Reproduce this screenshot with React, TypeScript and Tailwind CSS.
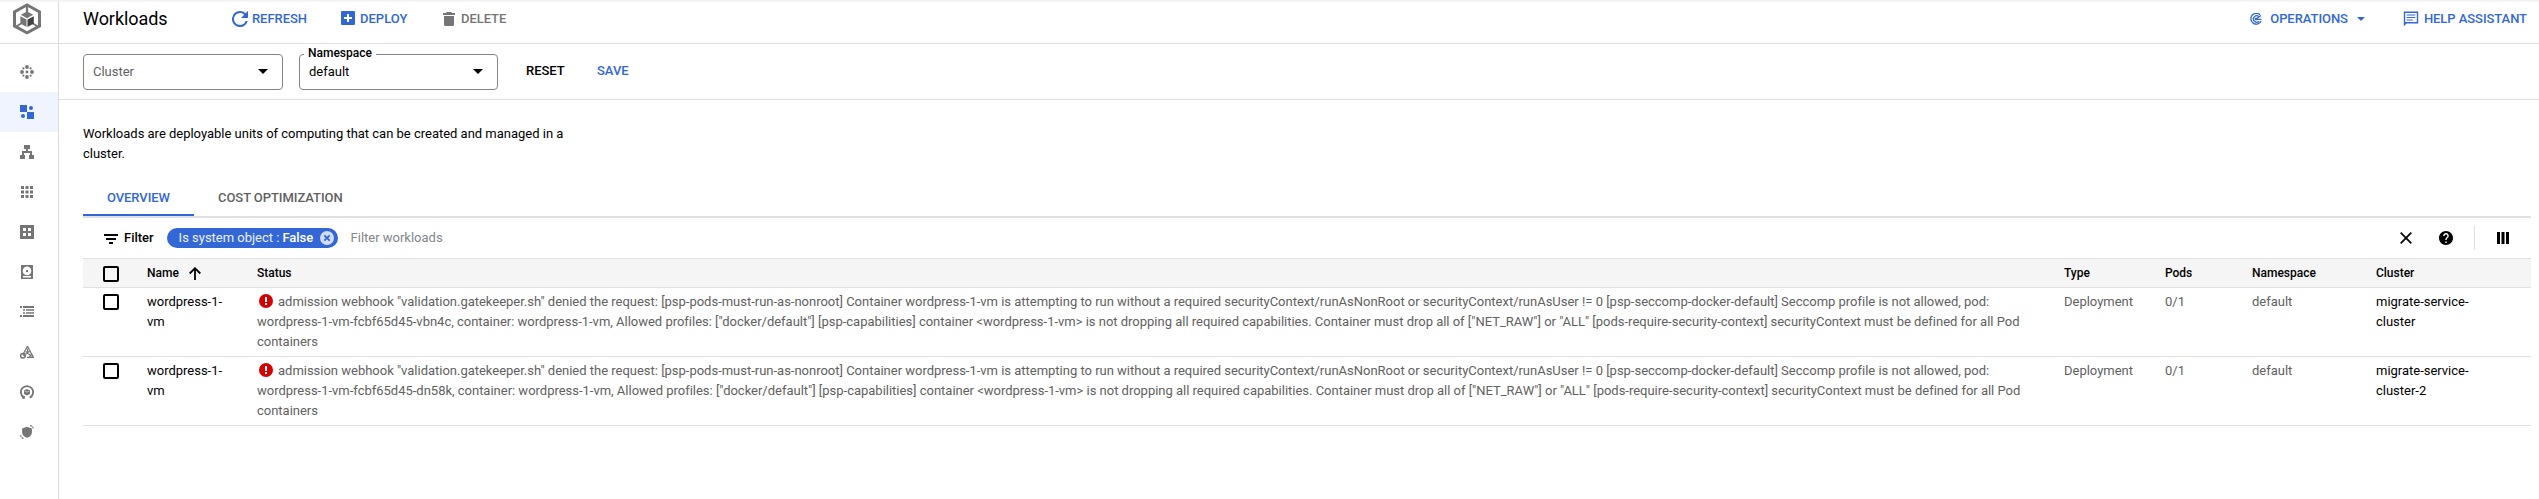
import type { ReactNode } from "react";

type GlyphProps = { children: ReactNode; size?: number; box?: string; className?: string };

function Glyph({ children, size = 14, box = "0 0 14 14", className = "" }: GlyphProps) {
  return (
    <svg width={size} height={size} viewBox={box} fill="currentColor" className={`shrink-0 ${className}`}>
      {children}
    </svg>
  );
}

function KubernetesLogo() {
  return (
    <svg width="28" height="32" viewBox="0 0 28 32" fill="#757575" className="shrink-0">
      <path d="M14 .2 28 7.900V23.900L14 31.600 0 23.900V7.900ZM14 3.600 3 9.700V22.100L14 28.200 25 22.100V9.700Z" fillRule="evenodd" />
      <path d="M12.900 3h2.200v6h-2.200ZM3 22.600l5.200-3 .9 1.500-5.200 3ZM25 22.600l-5.200-3-.9 1.500 5.200 3Z" />
      <path d="M14 8.400 20.200 11.800 14 15.200 7.800 11.800Z" />
      <path d="M7.400 13.200 13.500 16.600V24L7.400 20.600Z" />
      <path d="M20.800 13.200 14.500 16.600V24L20.800 20.600Z" fill="#424242" />
    </svg>
  );
}

const navIcons: { id: string; art: ReactNode }[] = [
  {
    id: "clusters",
    art: (
      <>
        <circle cx="7" cy="2" r="1.9" />
        <circle cx="7" cy="12" r="1.9" />
        <circle cx="2" cy="7" r="1.9" />
        <circle cx="12" cy="7" r="1.9" />
        <circle cx="7" cy="7" r="1.4" />
        <circle cx="3.4" cy="3.4" r="1.1" />
        <circle cx="10.6" cy="3.4" r="1.1" />
        <circle cx="3.4" cy="10.6" r="1.1" />
        <circle cx="10.6" cy="10.6" r="1.1" />
      </>
    ),
  },
  {
    id: "workloads",
    art: (
      <>
        <path d="M0 0h7v7H0ZM7 7h7v7H7Z" />
        <circle cx="11" cy="3" r="2" />
        <circle cx="3" cy="11" r="2" />
      </>
    ),
  },
  { id: "services", art: <path d="M4 0h6v4H8v2h4v4h2v4H9v-4h1V8H4v2h1v4H0v-4h2V6h4V4H4Z" /> },
  {
    id: "applications",
    art: <path d="M1 1h3v3H1ZM5.500 1h3v3h-3ZM10 1h3v3h-3ZM1 5.500h3v3H1ZM5.500 5.500h3v3h-3ZM10 5.500h3v3h-3ZM1 10h3v3H1ZM5.500 10h3v3h-3ZM10 10h3v3h-3Z" />,
  },
  { id: "secrets", art: <path fillRule="evenodd" d="M0 0h14v14H0ZM3 3v3h3V3ZM8 3v3h3V3ZM3 8v3h3V8ZM8 8v3h3V8Z" /> },
  {
    id: "storage",
    art: (
      <path
        fillRule="evenodd"
        d="M1 0h12v14H1ZM7 1.600a4.300 4.300 0 1 0 0 8.600 4.300 4.300 0 0 0 0-8.600ZM7 4.900a1.200 1.200 0 1 1 0 2.400 1.200 1.200 0 0 1 0-2.400ZM3 11v1.500h8V11Z"
      />
    ),
  },
  {
    id: "objects",
    art: <path d="M0 1h2v2H0ZM3 1h11v2H3ZM3 4.200h2v1.600H3ZM6 4.200h8v1.600H6ZM3 7.200h2v1.600H3ZM6 7.200h8v1.600H6ZM0 10h2v2H0ZM3 10h11v2H3Z" />,
  },
  {
    id: "migrate",
    art: (
      <>
        <path d="M7.500 1.300 13.300 12.300H7M7.500 1.300 3.600 8.300" fill="none" stroke="currentColor" strokeWidth="1.300" />
        <path
          d="M7.500 3.800V8.300L11.800 11.300M7.500 8.300 5.200 9.500M9.600 6.400 7.500 7.500 5.600 6.600M11.300 9.600 9.300 11.800"
          fill="none"
          stroke="currentColor"
          strokeWidth="1.200"
        />
        <circle cx="2.900" cy="10.800" r="2.300" fill="none" stroke="currentColor" strokeWidth="1.500" />
        <path d="M2.500 9.500 5 8.200 6.200 10.400 4 11.500Z" />
      </>
    ),
  },
  {
    id: "backup",
    art: (
      <>
        <path d="M4.300 12.600A6.100 6.100 0 1 1 9.700 12.600" fill="none" stroke="currentColor" strokeWidth="1.800" />
        <path d="M7 3.900 10 5.400V8.900L7 10.500 4 8.900V5.400Z" />
        <path d="M4.800 6 7 7.200 9.200 6" fill="none" stroke="#fff" strokeWidth=".6" />
        <path d="M2.300 13.700 2 12.500 4.900 10.700V13.700Z" />
      </>
    ),
  },
  {
    id: "security",
    art: (
      <>
        <path d="M7 1.700 11.900 3.500V7.200C11.900 9.900 9.800 11.900 7 12.800 4.200 11.900 2.100 9.900 2.100 7.200V3.500Z" />
        <path
          d="M10 .6C11.800.6 13.300 2 13.300 4M.7 10C.7 12 2.200 13.400 4 13.400"
          fill="none"
          stroke="currentColor"
          strokeWidth="1.100"
          strokeDasharray="2 .7"
        />
      </>
    ),
  },
];

function Caret() {
  return (
    <svg width="10" height="5" viewBox="0 0 10 5" className="shrink-0 text-black">
      <path d="M0 0h10L5 5Z" fill="currentColor" />
    </svg>
  );
}

function RefreshIcon() {
  return (
    <Glyph size={16} box="4 4 16 16">
      <path d="M17.650 6.350A7.960 7.960 0 0 0 12 4a8 8 0 1 0 7.730 10h-2.080A6 6 0 1 1 12 6c1.660 0 3.140.690 4.220 1.780L13 11h7V4Z" />
    </Glyph>
  );
}

function ErrorIcon() {
  return (
    <svg width="14" height="14" viewBox="0 0 14 14" className="ml-0.5 mr-[5px] inline-block align-[-2px]">
      <circle cx="7" cy="7" r="7" fill="#d50000" />
      <path d="M6 3h2v5H6ZM6 9h2v2H6Z" fill="#fff" />
    </svg>
  );
}

function Checkbox() {
  return <span className="block size-4 rounded-[2px] border-2 border-black" />;
}

const COLS = "grid grid-cols-[64px_110px_1807px_101px_87px_124px_155px]";

const rows = [
  { pod: "wordpress-1-vm-fcbf65d45-vbn4c", cluster: "migrate-service-cluster" },
  { pod: "wordpress-1-vm-fcbf65d45-dn58k", cluster: "migrate-service-cluster-2" },
];

const statusMessage = (pod: string) =>
  `admission webhook "validation.gatekeeper.sh" denied the request: [psp-pods-must-run-as-nonroot] Container wordpress-1-vm is attempting to run without a required securityContext/runAsNonRoot or securityContext/runAsUser != 0 [psp-seccomp-docker-default] Seccomp profile is not allowed, pod: ${pod}, container: wordpress-1-vm, Allowed profiles: ["docker/default"] [psp-capabilities] container <wordpress-1-vm> is not dropping all required capabilities. Container must drop all of ["NET_RAW"] or "ALL" [pods-require-security-context] securityContext must be defined for all Pod containers`;

export default function App() {
  return (
    <div className="relative flex h-[499px] w-[2539px] overflow-hidden bg-white font-['Roboto',sans-serif] text-[13px] leading-5 tracking-[-0.011px] text-black">
      <div className="absolute inset-x-0 top-0 h-[3px] bg-gradient-to-b from-[#f0f0f0] to-white/0" />
      <aside className="flex w-[59px] shrink-0 flex-col border-r border-[#dadce0] text-[#757575]">
        <div className="flex h-[44px] items-start border-b border-[#e0e0e0] pl-[13px] pt-[3px]">
          <KubernetesLogo />
        </div>
        <nav className="flex flex-col pt-2">
          {navIcons.map(({ id, art }) => (
            <a key={id} className={`flex h-10 items-center pl-5 ${id === "workloads" ? "bg-[#eff4fe] text-[#3367d6]" : ""}`}>
              <Glyph>{art}</Glyph>
            </a>
          ))}
        </nav>
      </aside>

      <main className="flex min-w-0 flex-1 flex-col">
        <header className="flex h-[44px] items-center border-b border-[#e0e0e0] pb-[5px] pl-6 font-medium tracking-[-0.06px] text-[#3367d6]">
          <h1 className="w-[149px] text-[18px] font-normal text-black">Workloads</h1>
          <button className="flex w-[109px] items-center gap-1">
            <RefreshIcon />
            REFRESH
          </button>
          <button className="flex w-[102px] items-center gap-[5px] tracking-normal">
            <Glyph className="-mt-0.5">
              <path
                fillRule="evenodd"
                d="M1 0h12a1 1 0 0 1 1 1v12a1 1 0 0 1-1 1H1a1 1 0 0 1-1-1V1a1 1 0 0 1 1-1ZM6 3v3H3v2h3v3h2V8h3V6H8V3Z"
              />
            </Glyph>
            DEPLOY
          </button>
          <button className="flex items-center gap-1.5 text-[#757575]">
            <svg width="12" height="14" viewBox="0 0 12 14" fill="currentColor">
              <path d="M3.500 0h5v1H12v2H0V1h3.500ZM1 4h10v8.500a1.500 1.500 0 0 1-1.500 1.500h-7A1.500 1.500 0 0 1 1 12.500Z" />
            </svg>
            DELETE
          </button>
          <button className="ml-auto flex items-center">
            <Glyph size={12} box="0 0 12 12" className="mr-2">
              <path
                d="M10 1.800A5.400 5.400 0 1 0 11.200 8M8.800 3.600A3.200 3.200 0 1 0 9 8.200M6 6 11 2.500M6 6.300H11.500"
                fill="none"
                stroke="currentColor"
                strokeWidth="1.300"
              />
              <circle cx="6" cy="6" r="1.300" />
            </Glyph>
            OPERATIONS
            <svg width="8" height="4" viewBox="0 0 8 4" className="ml-[9px]">
              <path d="M0 0h8L4 4Z" fill="currentColor" />
            </svg>
          </button>
          <button className="ml-[38px] mr-3 flex items-center gap-[5px]">
            <Glyph size={16} box="0 0 16 16">
              <path fillRule="evenodd" d="M.8.500h14.400v12H3.500L.8 15.300ZM2.200 1.900v9.200h11.600V1.900Z" />
              <path d="M3.700 3.400h8.600v1.200H3.700ZM3.700 5.900h8.600v1.200H3.700ZM3.700 8.400h6v1.200h-6Z" />
            </Glyph>
            HELP ASSISTANT
          </button>
        </header>

        <section className="flex h-[56px] items-start border-b border-[#e0e0e0] pl-6 pt-2.5 font-medium">
          <div className="flex h-9 w-[200px] items-center justify-between rounded-[4px] border border-[#80868b] pb-px pl-[9px] pr-[14px] font-normal text-[#616161]">
            Cluster
            <Caret />
          </div>
          <div className="relative ml-4 flex h-9 w-[199px] items-center justify-between rounded-[4px] border border-[#80868b] pb-px pl-[9px] pr-[14px] font-normal">
            <span className="absolute -top-2.5 left-1 bg-white px-1 text-xs leading-4 font-medium">Namespace</span>
            default
            <Caret />
          </div>
          <button className="ml-7 mt-[7px] w-[71px] text-left">RESET</button>
          <button className="mt-[7px] text-[#3367d6]">SAVE</button>
        </section>

        <div className="pl-6 pr-2">
          <p className="w-[490px] pt-6">Workloads are deployable units of computing that can be created and managed in a cluster.</p>

          <div className="mt-4 flex h-[38px] border-b-2 border-[#e0e0e0] font-medium tracking-[-0.06px] text-[#616161]">
            <div className="h-[36px] w-[111px] border-b-2 border-[#3367d6] pt-2 text-center text-[#3367d6]">OVERVIEW</div>
            <div className="pl-6 pt-2">COST OPTIMIZATION</div>
          </div>

          <div className="flex h-10 items-center pl-[21px]">
            <svg width="14" height="10" viewBox="0 0 14 10" className="mt-px">
              <path d="M0 0h14v2H0ZM2 4h10v2H2ZM5 8h4v2H5Z" />
            </svg>
            <span className="ml-1.5 font-medium">Filter</span>
            <div className="ml-[13px] flex h-5 w-[171px] items-center rounded-full bg-[#3367d6] pl-3 text-white">
              <span className="text-white/90">Is system object :</span>
              <span className="ml-[3px] font-medium">False</span>
              <svg width="14" height="14" viewBox="0 0 14 14" className="ml-auto mr-1">
                <circle cx="7" cy="7" r="7" fill="#d1dcf5" />
                <path d="m4.300 4.300 5.400 5.400M9.700 4.300 4.300 9.700" stroke="#3367d6" strokeWidth="1.800" />
              </svg>
            </div>
            <span className="ml-[13px] text-[#80868b]">Filter workloads</span>
            <svg width="12" height="12" viewBox="0 0 12 12" className="ml-auto mr-[27px]">
              <path d="m.7.700 10.600 10.600M11.300.700.7 11.300" stroke="#000" strokeWidth="1.700" />
            </svg>
            <svg width="14" height="14" viewBox="2 2 20 20" className="mr-[21px]">
              <path d="M12 2C6.480 2 2 6.480 2 12s4.480 10 10 10 10-4.480 10-10S17.520 2 12 2zm1 17h-2v-2h2v2zm2.070-7.750-.9.920C13.450 12.900 13 13.500 13 15h-2v-.5c0-1.100.450-2.100 1.170-2.830l1.240-1.260c.370-.360.590-.860.590-1.410 0-1.100-.9-2-2-2s-2 .9-2 2H8c0-2.210 1.790-4 4-4s4 1.790 4 4c0 .880-.360 1.680-.930 2.250z" />
            </svg>
            <div className="h-6 w-px bg-[#e0e0e0]" />
            <svg width="12" height="12" viewBox="0 0 12 12" className="mx-[22px]">
              <path d="M0 0h3v12H0ZM4.500 0h3v12h-3ZM9 0h3v12H9Z" />
            </svg>
          </div>

          <div className={`${COLS} h-[30px] border-y border-[#e0e0e0] bg-[#f5f5f5] pt-1 text-xs leading-5 font-medium`}>
            <div className="pl-5 pt-[3px]">
              <Checkbox />
            </div>
            <div className="flex items-start">
              Name
              <svg width="12" height="13" viewBox="0 0 12 13" className="ml-2.5 mt-1">
                <path d="M6 13V1.500M.7 6.500 6 1.200 11.300 6.500" fill="none" stroke="#000" strokeWidth="1.800" />
              </svg>
            </div>
            <div>Status</div>
            <div>Type</div>
            <div>Pods</div>
            <div>Namespace</div>
            <div>Cluster</div>
          </div>

          {rows.map((row) => (
            <div key={row.pod} className={`${COLS} h-[69px] border-b border-[#e0e0e0] pt-1 text-[#616161]`}>
              <div className="pl-5 pt-0.5">
                <Checkbox />
              </div>
              <div className="w-[90px] text-black">wordpress-1-vm</div>
              <div className="w-[1775px]">
                <ErrorIcon />
                {statusMessage(row.pod)}
              </div>
              <div>Deployment</div>
              <div>0/1</div>
              <div>default</div>
              <div className="w-[110px] text-black">{row.cluster}</div>
            </div>
          ))}
        </div>
      </main>
    </div>
  );
}
